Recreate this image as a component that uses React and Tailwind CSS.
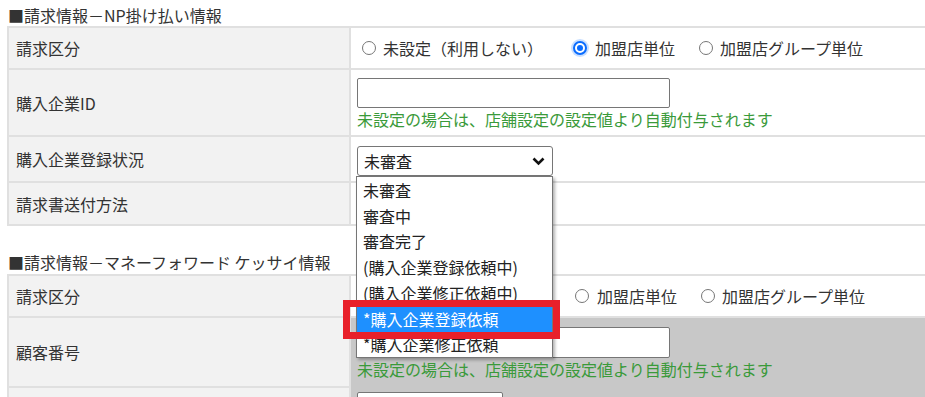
import React from "react";

function Radio({ checked }) {
  if (checked) {
    return (
      <span className="flex h-[14px] w-[14px] shrink-0 items-center justify-center rounded-full border-2 border-[#0a6cff] bg-white shadow-[0_0_0_2px_rgba(10,108,255,0.22)]">
        <span className="h-[6px] w-[6px] rounded-full bg-[#0a6cff]" />
      </span>
    );
  }
  return <span className="h-[14px] w-[14px] shrink-0 rounded-full border border-[#767676] bg-white" />;
}

function Label({ children }) {
  return (
    <div className="flex w-[342px] shrink-0 items-center border-r-2 border-[#e0e0e0] bg-[#f2f2f2] pl-[7px]">
      {children}
    </div>
  );
}

function RadioRow({ first = true }) {
  return (
    <div className="flex items-center">
      {first ? (
        <>
          <span className="ml-[5px]" />
          <Radio />
          <span className="ml-[7px]">未設定（利用しない）</span>
        </>
      ) : (
        <span className="w-[188px]" />
      )}
      <span className="ml-[30px]" />
      <Radio checked={first} />
      <span className="ml-[8px]">加盟店単位</span>
      <span className="ml-[24px]" />
      <Radio />
      <span className="ml-[7px]">加盟店グループ単位</span>
    </div>
  );
}

export default function App() {
  const items = [
    "未審査",
    "審査中",
    "審査完了",
    "(購入企業登録依頼中)",
    "(購入企業修正依頼中)",
    "*購入企業登録依頼",
    "*購入企業修正依頼",
  ];
  return (
    <div className="relative h-[397px] w-[925px] overflow-hidden bg-white font-['Noto_Sans_CJK_JP','Liberation_Sans',sans-serif] text-[16px] leading-[20px] text-[#333]">
      <div className="flex h-[26px] items-center pl-[8px] pt-[4px]">■請求情報－NP掛け払い情報</div>

      <div className="ml-[7px] w-[1000px] border-l-2 border-t-2 border-[#e0e0e0]">
        <div className="flex h-[42px] border-b-2 border-[#e0e0e0]">
          <Label>請求区分</Label>
          <div className="flex flex-1 items-center pl-[6px]">
            <RadioRow />
          </div>
        </div>
        <div className="flex h-[67px] border-b-2 border-[#e0e0e0]">
          <Label>購入企業ID</Label>
          <div className="flex flex-1 flex-col pl-[6px] pt-[8px]">
            <div className="h-[30px] w-[313px] rounded-[2px] border border-[#767676] bg-white" />
            <div className="mt-[1px] text-[#3a9a3a]">未設定の場合は、店舗設定の設定値より自動付与されます</div>
          </div>
        </div>
        <div className="flex h-[46px] border-b-2 border-[#e0e0e0]">
          <Label>購入企業登録状況</Label>
          <div className="flex-1 pl-[6px] pt-[9px]">
            <div className="flex h-[30px] w-[196px] items-center justify-between rounded-[3px] border border-[#767676] bg-white pl-[6px] pr-[7px] text-[#222]">
              <span>未審査</span>
              <svg width="13" height="9" viewBox="0 0 13 9">
                <polyline points="1.5,1.5 6.5,6.5 11.5,1.5" fill="none" stroke="#111" strokeWidth="2.6" />
              </svg>
            </div>
          </div>
        </div>
        <div className="flex h-[43px] border-b-2 border-[#e0e0e0]">
          <Label>請求書送付方法</Label>
          <div className="flex-1" />
        </div>
      </div>

      <div className="mt-[24px] flex h-[24px] items-center pl-[8px]">■請求情報－マネーフォワード ケッサイ情報</div>

      <div className="ml-[7px] w-[1000px] border-l-2 border-t-2 border-[#e0e0e0]">
        <div className="flex h-[42px] border-b-2 border-[#e0e0e0]">
          <Label>請求区分</Label>
          <div className="flex flex-1 items-center pl-[6px]">
            <RadioRow first={false} />
          </div>
        </div>
        <div className="flex h-[70px]">
          <div className="flex w-[342px] shrink-0 items-center border-b-2 border-r-2 border-[#e0e0e0] bg-[#f2f2f2] pl-[7px]">
            顧客番号
          </div>
          <div className="flex flex-1 flex-col bg-[#c8c8c8] pl-[6px] pt-[9px]">
            <div className="h-[31px] w-[313px] rounded-[2px] border border-[#767676] bg-white" />
            <div className="mt-[1px] text-[#3a9a3a]">未設定の場合は、店舗設定の設定値より自動付与されます</div>
          </div>
        </div>
        <div className="flex h-[40px]">
          <div className="w-[342px] shrink-0 border-r-2 border-[#e0e0e0] bg-[#f2f2f2]" />
          <div className="flex-1 bg-[#c8c8c8] pl-[6px] pt-[4px]">
            <div className="h-[30px] w-[146px] rounded-[2px] border border-[#767676] bg-white" />
          </div>
        </div>
      </div>

      <div className="absolute left-[356px] top-[176px] w-[197px] border border-[#767676] bg-white text-[#222] shadow-[2px_2px_3px_rgba(0,0,0,0.3)]">
        {items.map((t, i) => (
          <div
            key={t}
            className={
              i === 5
                ? "flex h-[25.75px] items-center bg-[#1e90ff] pl-[6px] text-white"
                : "flex h-[25.75px] items-center pl-[6px]"
            }
          >
            {t}
          </div>
        ))}
      </div>

      <div className="absolute left-[343px] top-[300px] h-[39px] w-[217px] border-[7px] border-[#e8202a]" />
    </div>
  );
}
